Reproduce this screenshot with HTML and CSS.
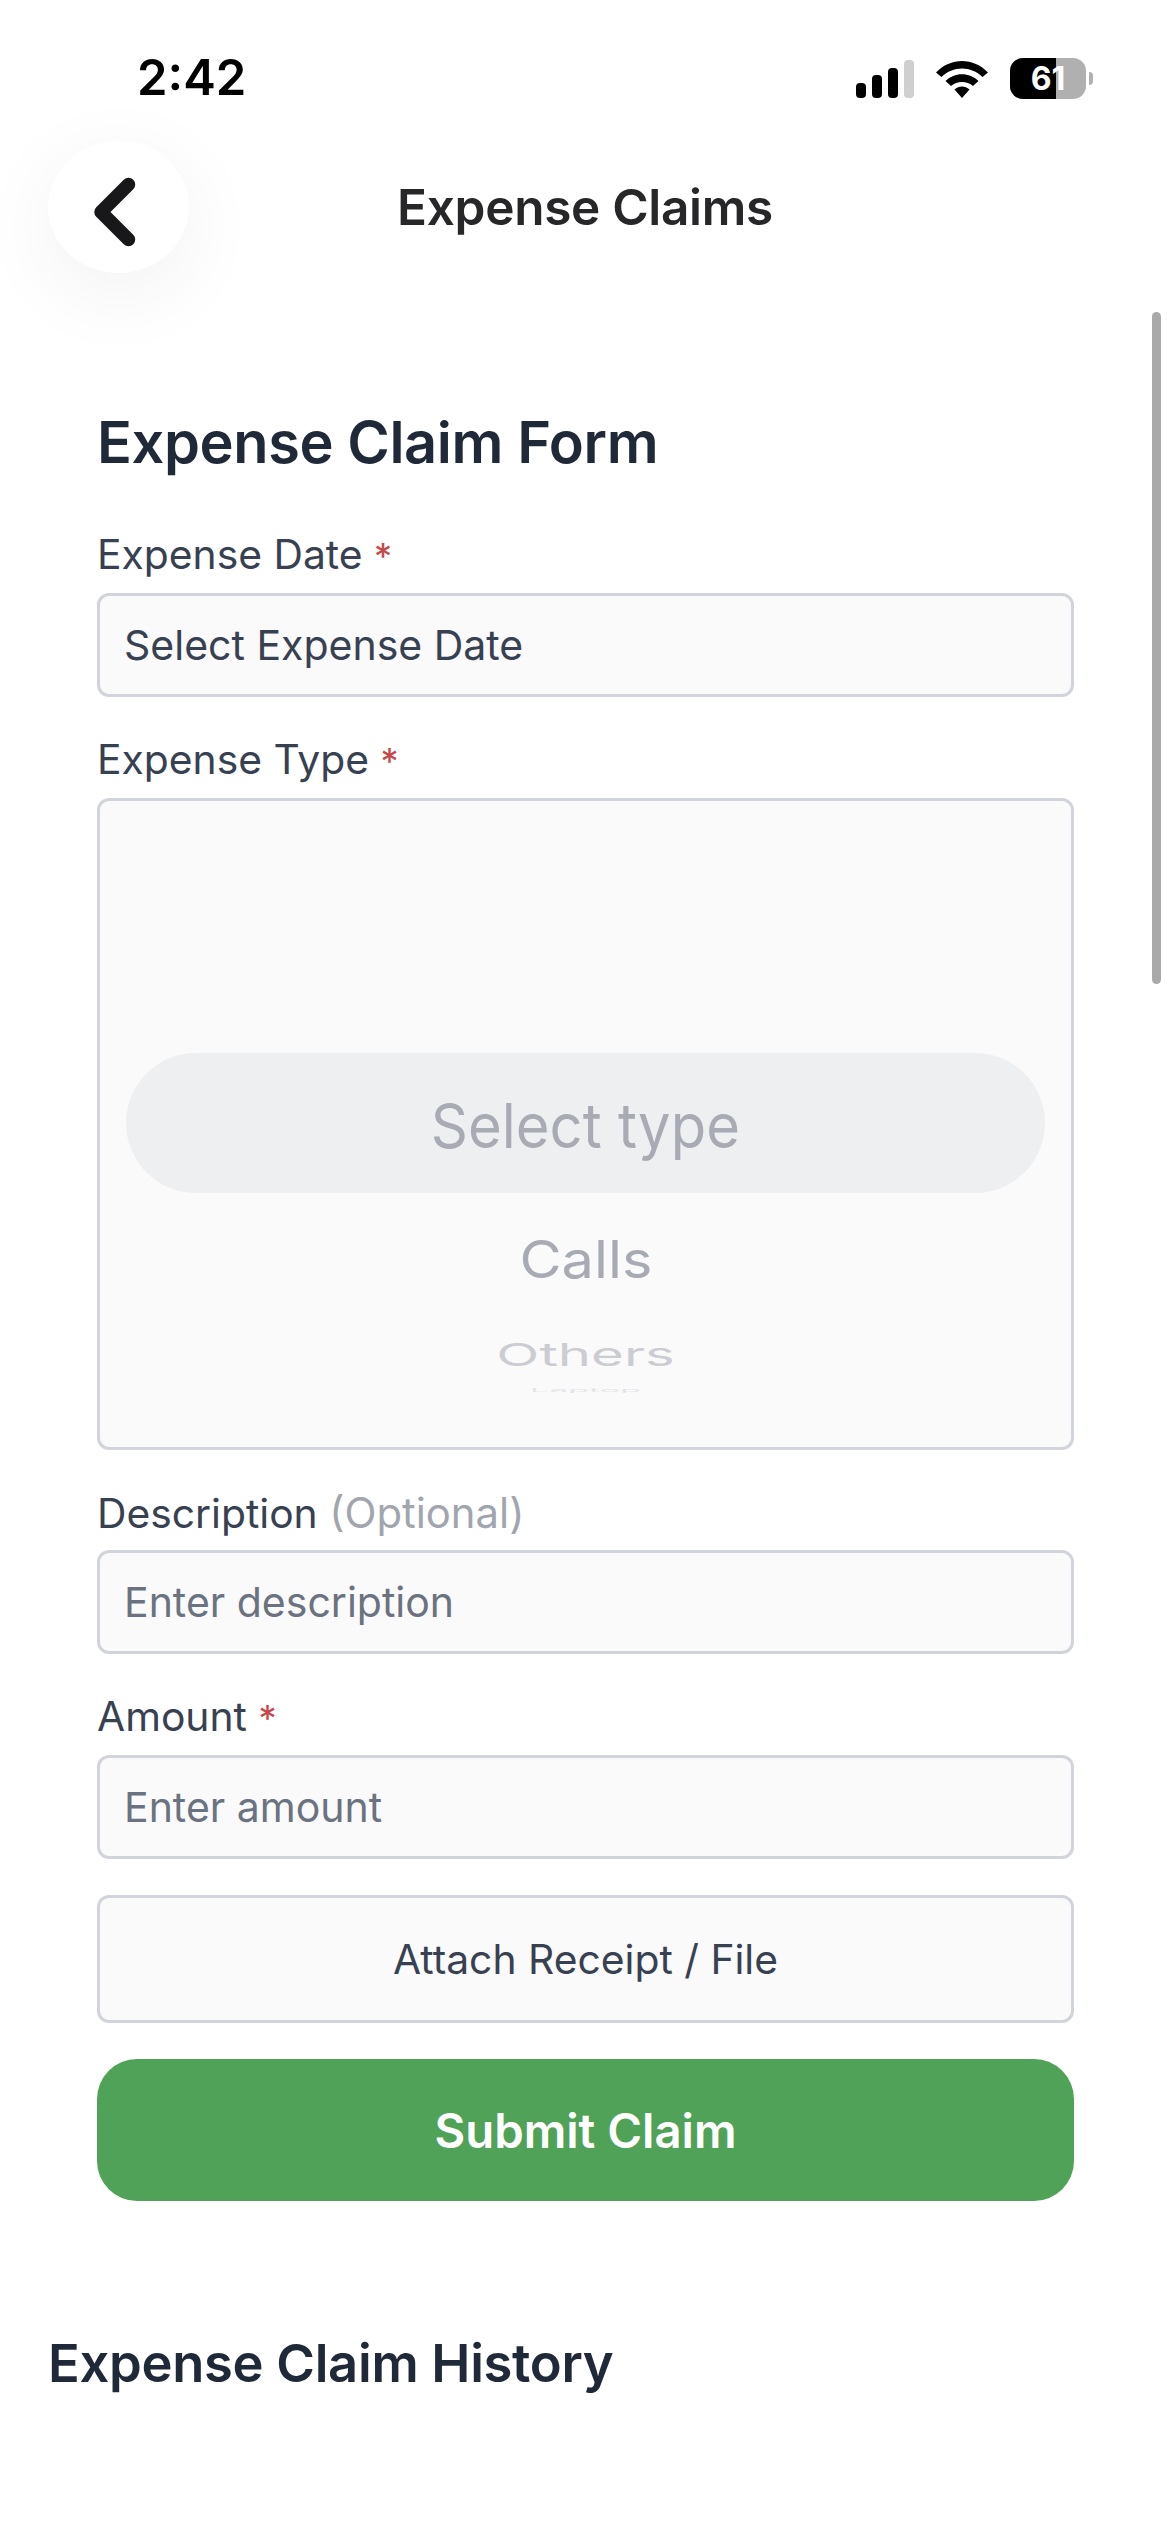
FILE: index.html
```html
<!DOCTYPE html>
<html lang="en">
<head>
<meta charset="utf-8">
<title>Expense Claims</title>
<link rel="stylesheet" href="styles.css">
</head>
<body>
<div class="screen">
  <div class="status">
    <span class="time">2:42</span>
    <div class="status-icons">
      <svg class="signal" width="58" height="38" viewBox="0 0 58 38"><rect x="0" y="23" width="10" height="15" rx="4" fill="#000"/><rect x="16" y="15" width="10" height="23" rx="4" fill="#000"/><rect x="32" y="8" width="10" height="30" rx="4" fill="#000"/><rect x="48" y="0" width="10" height="38" rx="4" fill="#cfcfcf"/></svg>
      <svg class="wifi" width="52" height="38" viewBox="0 0 52 38"><path d="M0 12.5C14-3 38-3 52 12.500L46.500 17C35 5.500 17 5.500 5.500 17Z" fill="#000"/><path d="M9.500 21C18.500 12 33.500 12 42.500 21L37 26C31 20.500 21 20.500 15 26Z" fill="#000"/><path d="M18.500 29.500C23 25.500 29 25.500 33.500 29.500L26 38Z" fill="#000"/></svg>
      <div class="battery">
        <div class="batt-body"><div class="batt-fill"></div><span class="batt-text">61</span></div>
        <div class="batt-cap"></div>
      </div>
    </div>
  </div>
  <header class="topbar">
    <button class="back" aria-label="Back"><svg width="44" height="72" viewBox="0 0 44 72"><path d="M35.500 8.500 8 36l27.500 27.500" fill="none" stroke="#18181b" stroke-width="13.500" stroke-linecap="round" stroke-linejoin="round"/></svg></button>
    <h1 class="title">Expense Claims</h1>
  </header>
  <main class="form">
    <h2 class="form-title">Expense Claim Form</h2>
    <label class="label">Expense Date <span class="req">*</span></label>
    <div class="field field-value">Select Expense Date</div>
    <label class="label">Expense Type <span class="req">*</span></label>
    <div class="picker">
      <div class="pill"><span class="opt opt-sel">Select type</span></div>
      <span class="opt opt-calls">Calls</span>
      <span class="opt opt-others">Others</span>
      <span class="opt opt-last">Laptop</span>
    </div>
    <label class="label">Description <span class="optional">(Optional)</span></label>
    <div class="field field-ph">Enter description</div>
    <label class="label">Amount <span class="req">*</span></label>
    <div class="field field-ph">Enter amount</div>
    <button class="attach">Attach Receipt / File</button>
    <button class="submit">Submit Claim</button>
  </main>
  <h2 class="history">Expense Claim History</h2>
  <div class="scrollbar"></div>
</div>
</body>
</html>
```
FILE: styles.css
```css
* { box-sizing: border-box; }
html, body { margin: 0; padding: 0; background: #fff; }
body { font-family: Inter, "Noto Sans", sans-serif; }
.screen { position: relative; width: 1170px; height: 2532px; overflow: hidden; background: #fff; }

.status { height: 120px; display: flex; justify-content: space-between; align-items: flex-start; padding: 49px 77px 0 137px; }
.time { font-size: 49px; line-height: 58px; font-weight: 600; color: #000; letter-spacing: 0; }
.status-icons { display: flex; align-items: center; gap: 22px; margin-top: 9px; }
.signal { display: block; }
.wifi { display: block; margin-right: 0; }
.battery { display: flex; align-items: center; gap: 3px; }
.batt-body { position: relative; width: 76px; height: 41px; border-radius: 13px; background: #b0b0b0; overflow: hidden; display: flex; align-items: center; justify-content: center; }
.batt-fill { position: absolute; left: 0; top: 0; bottom: 0; width: 61%; background: #000; }
.batt-text { position: relative; color: #fff; font-size: 32px; line-height: 41px; font-weight: 700; }
.batt-cap { width: 4px; height: 13px; border-radius: 0 7px 7px 0; background: #b0b0b0; }

.topbar { position: relative; height: 287px; display: flex; align-items: flex-start; justify-content: center; }
.back { position: absolute; left: 48px; top: 21px; width: 141px; height: 132px; border: 0; border-radius: 50%; background: #fff; box-shadow: 0 20px 84px rgba(0,0,0,0.06); display: flex; align-items: center; justify-content: center; padding: 10px 8px 0 0; }
.back svg { display: block; }
.title { margin: 0; padding-top: 57px; font-size: 49.500px; line-height: 60px; font-weight: 600; color: #27272a; letter-spacing: -0.3px; }

.form { padding: 0 96px 0 97px; display: flex; flex-direction: column; }
.form-title { margin: 0 0 51px; font-size: 57.700px; line-height: 70px; font-weight: 600; color: #1f2937; letter-spacing: -0.4px; }
.label { display: block; font-size: 40.800px; line-height: 52px; font-weight: 400; color: #374151; margin-bottom: 11px; }
.req { color: #c8474a; font-size: 36px; }
.optional { color: #a1a5ad; font-size: 41.800px; }
.field { height: 104px; border: 3px solid #d1d5db; border-radius: 12px; background: #fafafa; padding: 0 24px; display: flex; align-items: center; font-size: 41px; margin-bottom: 36px; }
.field-value { color: #374151; }
.field-ph { color: #6b7280; }

.picker { position: relative; height: 652px; border: 3px solid #d1d5db; border-radius: 12px; background: #fafafa; margin-bottom: 37px; display: flex; flex-direction: column; align-items: center; padding: 252px 26px 0; }
.pill { width: 100%; height: 140px; border-radius: 70px; background: #eeeff1; display: flex; align-items: center; justify-content: center; flex: none; }
.opt { display: block; text-align: center; color: #a8abb3; }
.opt-sel { font-size: 62px; line-height: 70px; padding-top: 5px; transform: scaleX(0.935); }
.opt-calls { margin-top: 32px; font-size: 52px; line-height: 70px; transform: scaleX(1.11); }
.opt-others { margin-top: 35px; font-size: 42px; line-height: 50px; color: #cbcdd2; transform: scale(1.34, 0.75); }
.opt-last { margin-top: 0; font-size: 34px; line-height: 20px; color: #e4e5e8; transform: scaleY(0.14); }

.attach { height: 128px; border: 3px solid #d1d5db; border-radius: 12px; background: #fafafa; font: 400 40.800px Inter, sans-serif; color: #374151; margin-bottom: 36px; padding: 0; }
.submit { height: 142px; border: 0; border-radius: 40px; background: #4fa257; font: 600 47.300px Inter, sans-serif; color: #fff; padding: 0; }

.history { margin: 130px 0 0 48px; font-size: 52.500px; line-height: 64px; font-weight: 600; color: #1f2937; letter-spacing: -0.3px; }
.scrollbar { position: absolute; left: 1152px; top: 312px; width: 9px; height: 672px; border-radius: 5px; background: #a9a9a9; }
```
